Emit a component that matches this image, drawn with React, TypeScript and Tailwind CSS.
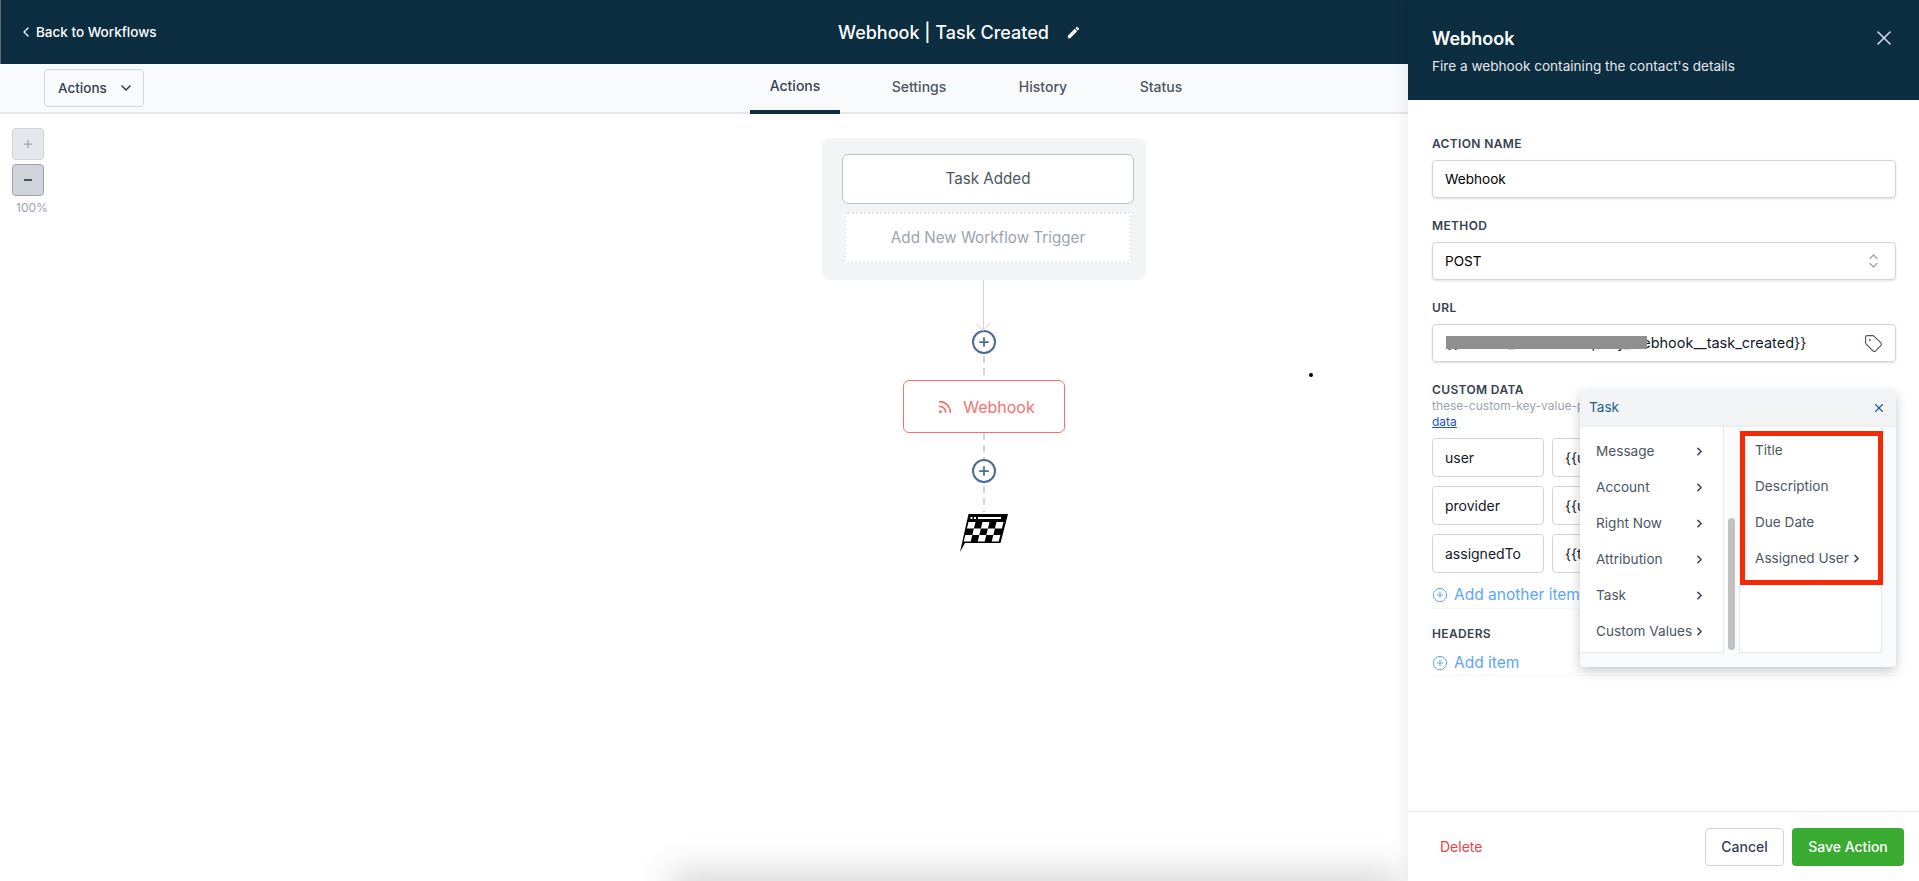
import { ChevronDown, ChevronLeft, ChevronRight, CirclePlus, Plus, Rss, Tag, X } from "lucide-react";
import { MdEdit } from "react-icons/md";

function Label({ children }: { children: string }) {
  return <div className="text-xs leading-4 font-semibold tracking-[0.03em] text-[#374151]">{children}</div>;
}

function AddCircle() {
  return (
    <div className="flex h-[24px] w-[24px] items-center justify-center rounded-full border-[2.5px] border-[#4a6b94] bg-white">
      <Plus size={14} strokeWidth={3} className="text-[#4a6b94]" />
    </div>
  );
}

function Dashed({ h }: { h: string }) {
  return <div className={`${h} w-[2px] bg-[repeating-linear-gradient(to_bottom,#d1d5db_0,#d1d5db_7px,transparent_7px,transparent_12px)]`} />;
}

function Flag() {
  const cells: [number, number][] = [];
  for (let r = 0; r < 3; r++) for (let c = 0; c < 5; c++) if ((r + c) % 2 === 0) cells.push([r, c]);
  return (
    <svg width="50" height="40" viewBox="0 0 50 40" className="block">
      <path d="M8.5 1H48L40.5 30H5L0 39Z" fill="#000" />
      <rect x="10.5" y="4" width="2" height="2" fill="#fff" />
      <rect x="14" y="4" width="2" height="2" fill="#fff" />
      <rect x="18" y="4" width="23" height="2" fill="#fff" />
      {cells.map(([r, c]) => {
        const x = 8.5 - r * 1.6 + c * 7;
        const y = 9 + r * 6.5;
        return <path key={`${r}-${c}`} d={`M${x} ${y}h7l-1.6 6.5h-7z`} fill="#fff" />;
      })}
    </svg>
  );
}

const menu = ["Message", "Account", "Right Now", "Attribution", "Task", "Custom Values"];
const sub = ["Title", "Description", "Due Date"];

export default function App() {
  return (
    <div className="relative h-[881px] w-full overflow-hidden bg-white font-['Inter',sans-serif]">
      <header className="grid h-16 grid-cols-[1fr_auto_1fr] items-center border-l border-l-[#5b6f7d] bg-[#0d2d41] pl-[17px] text-white">
        <div className="flex items-center gap-[2px] text-[13.5px] font-medium">
          <ChevronLeft size={16} strokeWidth={2} />
          Back to Workflows
        </div>
        <div className="flex items-center gap-[17px] pr-[18px] text-[18px] font-medium">
          Webhook | Task Created
          <MdEdit size={15} />
        </div>
        <div />
      </header>

      <div className="flex h-[50px] items-stretch border-b-2 border-[#e5e7eb] bg-[#f9fafb] pl-[44px]">
        <div className="mt-[5px] flex h-[38px] w-[100px] items-center gap-[11px] rounded border border-[#d1d5db] pl-[13px] text-[13.5px] font-medium text-[#374151]">
          Actions
          <ChevronDown size={16} strokeWidth={2.5} />
        </div>
        <nav className="ml-[606px] flex text-sm font-medium text-[#4b5563]">
          <div className="flex h-[50px] w-[90px] items-center justify-center border-b-4 border-[#0d2d41] pb-[2px] text-[#374151]">Actions</div>
          <div className="flex w-[158px] items-center justify-center pb-[2px]">Settings</div>
          <div className="flex w-[90px] items-center justify-center pb-[2px]">History</div>
          <div className="ml-[48px] flex w-[50px] items-center justify-center pb-[2px]">Status</div>
        </nav>
      </div>

      <main className="flex items-start">
        <div className="ml-[12px] mt-[14px] flex w-[36px] flex-col gap-[4px]">
          <div className="flex h-[32px] w-[32px] items-center justify-center rounded border border-[#d1d5db] bg-[#e5e7eb] text-[#9ca3af]">
            <Plus size={12} strokeWidth={2.5} />
          </div>
          <div className="flex h-[32px] w-[32px] items-center justify-center rounded border border-[#9ca3af] bg-[#d1d5db] text-[#4b5563]">
            <div className="h-[2px] w-[8px] bg-[#4b5563]" />
          </div>
          <div className="pl-[4px] text-xs leading-4 text-[#9ca3af]">100%</div>
        </div>

        <div className="ml-[774px] mt-[24px] flex w-[324px] flex-col items-center">
          <div className="flex h-[142px] w-[324px] flex-col items-start rounded-lg bg-[#f3f4f6] pl-[20px] pt-[16px]">
            <div className="flex h-[50px] w-[292px] items-center justify-center rounded-md border border-[#b9c3cb] bg-white pt-[1px] text-[15.2px] text-[#4b5563]">Task Added</div>
            <div className="ml-[2px] mt-[8px] flex h-[52px] w-[288px] items-center justify-center rounded border-2 border-dotted border-[#e5e7eb] bg-white pt-[1px] text-[15.2px] text-[#9ca3af]">Add New Workflow Trigger</div>
          </div>
          <div className="relative h-[50px] w-px -translate-x-[1px] bg-[#d1d5db]">
            <div className="absolute bottom-[1px] left-[-5px] h-[10px] w-[10px] rotate-45 border-b border-r border-[#d9dce2]" />
          </div>
          <AddCircle />
          <div className="mt-[2px]" />
          <Dashed h="h-[24px]" />
          <div className="flex h-[53px] w-[162px] items-center justify-center gap-[10px] rounded-md border border-[#f87171] bg-white pl-[4px] text-base text-[#f87171]">
            <Rss size={16} strokeWidth={2.5} />
            Webhook
          </div>
          <Dashed h="h-[26px]" />
          <AddCircle />
          <div className="mt-[3px]" />
          <Dashed h="h-[26px]" />
          <div className="mt-[1px] translate-x-[1px]">
            <Flag />
          </div>
        </div>
      </main>

      <div className="absolute left-[1309px] top-[373px] h-[4px] w-[4px] rounded-full bg-black" />
      <div className="absolute bottom-[-40px] left-[680px] h-[40px] w-[710px] shadow-[0_0_36px_10px_rgba(0,0,0,0.16)]" />

      <aside className="absolute right-0 top-0 flex h-[881px] w-[511px] flex-col bg-white shadow-[-4px_0_12px_rgba(0,0,0,0.06)]">
        <div className="flex h-[100px] shrink-0 items-start justify-between bg-[#0d2d41] pl-[24px] pr-[23px] pt-[25px]">
          <div>
            <div className="text-lg leading-7 font-semibold text-white">Webhook</div>
            <div className="mt-[3px] text-[13.6px] leading-5 text-[#e5e7eb]">Fire a webhook containing the contact's details</div>
          </div>
          <X size={24} strokeWidth={1.6} className="mt-[1px] text-[#d1d9f0]" />
        </div>

        <div className="flex flex-1 flex-col pl-[24px] pr-[23px] pt-[36px]">
          <Label>ACTION NAME</Label>
          <div className="mt-[8px] flex h-[38px] items-center rounded border border-[#d1d5db] pl-[12px] text-[13.6px] text-black shadow-sm">Webhook</div>

          <div className="mt-[20px]"><Label>METHOD</Label></div>
          <div className="mt-[8px] flex h-[38px] items-center justify-between rounded border border-[#d1d5db] pl-[12px] pr-[17px] text-[13.6px] text-black shadow-sm">
            POST
            <svg width="9" height="14" viewBox="0 0 9 14" fill="none" stroke="#9ca3af" strokeWidth="1.3" strokeLinecap="round" strokeLinejoin="round">
              <path d="M1 4.5 4.5 1 8 4.5" />
              <path d="M1 9.5 4.5 13 8 9.5" />
            </svg>
          </div>

          <div className="mt-[20px]"><Label>URL</Label></div>
          <div className="relative mt-[8px] flex h-[38px] items-center justify-between rounded border border-[#d1d5db] pl-[12px] pr-[12px] text-[14.5px] text-[#111827] shadow-sm">
            <span className="whitespace-nowrap">{"{{custom_values.company_webhook__task_created}}"}</span>
            <Tag size={19} strokeWidth={1.4} className="text-[#4b5563]" />
            <div className="absolute left-[13px] top-[11px] h-[13px] w-[201px] bg-[#8f8f8f]" />
          </div>

          <div className="mt-[20px]"><Label>CUSTOM DATA</Label></div>
          <div className="text-xs leading-4 text-[#9ca3af]">these-custom-key-value-pairs</div>
          <a className="text-xs leading-4 text-[#1d4ed8] underline">data</a>

          <div className="mt-[8px] grid grid-cols-[112px_1fr] gap-x-[8px] gap-y-[9px] text-sm text-[#111827]">
            {[
              ["user", "{{user.name}}"],
              ["provider", "{{user.provider}}"],
              ["assignedTo", "{{task.assigned}}"],
            ].map(([k, v]) => (
              <div key={k} className="contents">
                <div className="flex h-[39px] items-center rounded border border-[#d1d5db] pl-[12px]">{k}</div>
                <div className="flex h-[39px] items-center rounded border border-[#d1d5db] pl-[12px]">{v}</div>
              </div>
            ))}
          </div>
          <div className="mt-[12px] flex items-center gap-[6px] border-b border-[#f7f8f9] pb-[3px] text-[15.5px] leading-5 text-[#60a5fa]">
            <CirclePlus size={16} strokeWidth={1.5} />
            Add another item
          </div>
          <div className="mt-[17px]"><Label>HEADERS</Label></div>
          <div className="mt-[11px] flex items-center gap-[6px] border-b border-[#f7f8f9] pb-[2px] text-[15.5px] leading-5 text-[#60a5fa]">
            <CirclePlus size={16} strokeWidth={1.5} />
            Add item
          </div>
        </div>

        <footer className="flex h-[70px] shrink-0 items-center border-t border-[#e5e7eb] pl-[32px] pr-[15px]">
          <span className="text-sm text-[#ef4444]">Delete</span>
          <div className="ml-auto flex gap-[8px] text-sm font-medium">
            <div className="flex h-[38px] w-[79px] items-center justify-center rounded border border-[#d1d5db] text-[#374151]">Cancel</div>
            <div className="flex h-[38px] w-[112px] items-center justify-center rounded bg-[#38ab30] text-white">Save Action</div>
          </div>
        </footer>

        <div className="absolute left-[172px] top-[390px] w-[316px] rounded bg-[#f9fafb] text-[13.6px] text-[#4b5563] shadow-[0_4px_12px_rgba(0,0,0,0.22)]">
          <div className="flex h-[37px] items-center justify-between border-b-2 border-[#eceef1] bg-[#f3f4f6] pl-[9px] pr-[10px] text-[#1f5f86]">
            Task
            <X size={14} strokeWidth={2} />
          </div>
          <div className="flex h-[226px] items-start">
            <div className="flex h-[226px] w-[144px] flex-col gap-[16px] border-b border-r border-[#e5e7eb] bg-white pl-[16px] pr-[17px] pt-[14px]">
              {menu.map((m) => (
                <div key={m} className="flex h-[20px] items-center justify-between whitespace-nowrap">
                  {m}
                  <ChevronRight size={13} strokeWidth={2.8} className="text-[#374151]" />
                </div>
              ))}
            </div>
            <div className="relative h-[226px] w-[15px]">
              <div className="absolute bottom-[3px] left-[4px] h-[132px] w-[7px] rounded-full bg-[#c1c1c1]" />
            </div>
            <div className="flex h-[226px] w-[143px] flex-col gap-[16px] border-b border-r border-l border-[#e5e7eb] bg-white pl-[15px] pt-[13px]">
              {sub.map((m) => (
                <div key={m} className="h-[20px]">{m}</div>
              ))}
              <div className="flex h-[20px] items-center gap-[1px]">
                Assigned User
                <ChevronRight size={13} strokeWidth={2.8} className="text-[#374151]" />
              </div>
            </div>
          </div>
          <div className="h-[14px]" />
          <div className="absolute left-[160px] top-[41px] h-[154px] w-[143px] border-[5px] border-[#f52a05]" />
        </div>
      </aside>
    </div>
  );
}
